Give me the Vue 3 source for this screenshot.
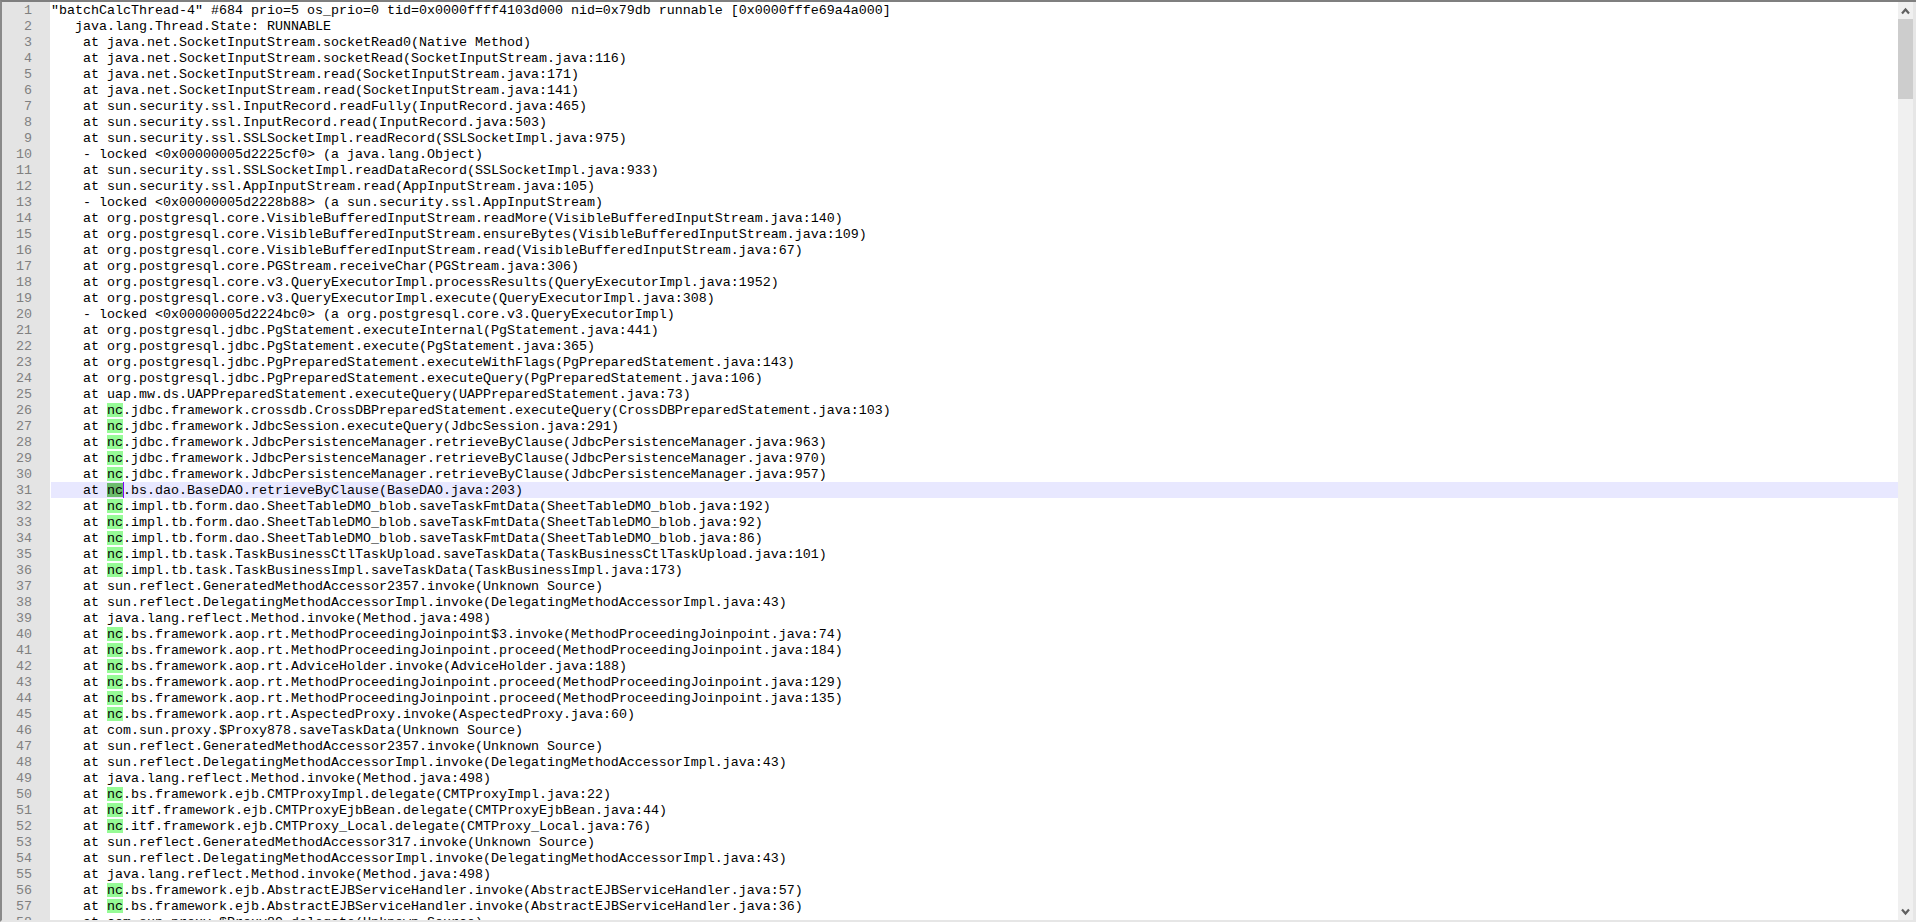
<script setup>
const raw = `"batchCalcThread-4" #684 prio=5 os_prio=0 tid=0x0000ffff4103d000 nid=0x79db runnable [0x0000fffe69a4a000]
   java.lang.Thread.State: RUNNABLE
    at java.net.SocketInputStream.socketRead0(Native Method)
    at java.net.SocketInputStream.socketRead(SocketInputStream.java:116)
    at java.net.SocketInputStream.read(SocketInputStream.java:171)
    at java.net.SocketInputStream.read(SocketInputStream.java:141)
    at sun.security.ssl.InputRecord.readFully(InputRecord.java:465)
    at sun.security.ssl.InputRecord.read(InputRecord.java:503)
    at sun.security.ssl.SSLSocketImpl.readRecord(SSLSocketImpl.java:975)
    - locked <0x00000005d2225cf0> (a java.lang.Object)
    at sun.security.ssl.SSLSocketImpl.readDataRecord(SSLSocketImpl.java:933)
    at sun.security.ssl.AppInputStream.read(AppInputStream.java:105)
    - locked <0x00000005d2228b88> (a sun.security.ssl.AppInputStream)
    at org.postgresql.core.VisibleBufferedInputStream.readMore(VisibleBufferedInputStream.java:140)
    at org.postgresql.core.VisibleBufferedInputStream.ensureBytes(VisibleBufferedInputStream.java:109)
    at org.postgresql.core.VisibleBufferedInputStream.read(VisibleBufferedInputStream.java:67)
    at org.postgresql.core.PGStream.receiveChar(PGStream.java:306)
    at org.postgresql.core.v3.QueryExecutorImpl.processResults(QueryExecutorImpl.java:1952)
    at org.postgresql.core.v3.QueryExecutorImpl.execute(QueryExecutorImpl.java:308)
    - locked <0x00000005d2224bc0> (a org.postgresql.core.v3.QueryExecutorImpl)
    at org.postgresql.jdbc.PgStatement.executeInternal(PgStatement.java:441)
    at org.postgresql.jdbc.PgStatement.execute(PgStatement.java:365)
    at org.postgresql.jdbc.PgPreparedStatement.executeWithFlags(PgPreparedStatement.java:143)
    at org.postgresql.jdbc.PgPreparedStatement.executeQuery(PgPreparedStatement.java:106)
    at uap.mw.ds.UAPPreparedStatement.executeQuery(UAPPreparedStatement.java:73)
    at nc.jdbc.framework.crossdb.CrossDBPreparedStatement.executeQuery(CrossDBPreparedStatement.java:103)
    at nc.jdbc.framework.JdbcSession.executeQuery(JdbcSession.java:291)
    at nc.jdbc.framework.JdbcPersistenceManager.retrieveByClause(JdbcPersistenceManager.java:963)
    at nc.jdbc.framework.JdbcPersistenceManager.retrieveByClause(JdbcPersistenceManager.java:970)
    at nc.jdbc.framework.JdbcPersistenceManager.retrieveByClause(JdbcPersistenceManager.java:957)
    at nc.bs.dao.BaseDAO.retrieveByClause(BaseDAO.java:203)
    at nc.impl.tb.form.dao.SheetTableDMO_blob.saveTaskFmtData(SheetTableDMO_blob.java:192)
    at nc.impl.tb.form.dao.SheetTableDMO_blob.saveTaskFmtData(SheetTableDMO_blob.java:92)
    at nc.impl.tb.form.dao.SheetTableDMO_blob.saveTaskFmtData(SheetTableDMO_blob.java:86)
    at nc.impl.tb.task.TaskBusinessCtlTaskUpload.saveTaskData(TaskBusinessCtlTaskUpload.java:101)
    at nc.impl.tb.task.TaskBusinessImpl.saveTaskData(TaskBusinessImpl.java:173)
    at sun.reflect.GeneratedMethodAccessor2357.invoke(Unknown Source)
    at sun.reflect.DelegatingMethodAccessorImpl.invoke(DelegatingMethodAccessorImpl.java:43)
    at java.lang.reflect.Method.invoke(Method.java:498)
    at nc.bs.framework.aop.rt.MethodProceedingJoinpoint$3.invoke(MethodProceedingJoinpoint.java:74)
    at nc.bs.framework.aop.rt.MethodProceedingJoinpoint.proceed(MethodProceedingJoinpoint.java:184)
    at nc.bs.framework.aop.rt.AdviceHolder.invoke(AdviceHolder.java:188)
    at nc.bs.framework.aop.rt.MethodProceedingJoinpoint.proceed(MethodProceedingJoinpoint.java:129)
    at nc.bs.framework.aop.rt.MethodProceedingJoinpoint.proceed(MethodProceedingJoinpoint.java:135)
    at nc.bs.framework.aop.rt.AspectedProxy.invoke(AspectedProxy.java:60)
    at com.sun.proxy.$Proxy878.saveTaskData(Unknown Source)
    at sun.reflect.GeneratedMethodAccessor2357.invoke(Unknown Source)
    at sun.reflect.DelegatingMethodAccessorImpl.invoke(DelegatingMethodAccessorImpl.java:43)
    at java.lang.reflect.Method.invoke(Method.java:498)
    at nc.bs.framework.ejb.CMTProxyImpl.delegate(CMTProxyImpl.java:22)
    at nc.itf.framework.ejb.CMTProxyEjbBean.delegate(CMTProxyEjbBean.java:44)
    at nc.itf.framework.ejb.CMTProxy_Local.delegate(CMTProxy_Local.java:76)
    at sun.reflect.GeneratedMethodAccessor317.invoke(Unknown Source)
    at sun.reflect.DelegatingMethodAccessorImpl.invoke(DelegatingMethodAccessorImpl.java:43)
    at java.lang.reflect.Method.invoke(Method.java:498)
    at nc.bs.framework.ejb.AbstractEJBServiceHandler.invoke(AbstractEJBServiceHandler.java:57)
    at nc.bs.framework.ejb.AbstractEJBServiceHandler.invoke(AbstractEJBServiceHandler.java:36)
    at com.sun.proxy.$Proxy89.delegate(Unknown Source)`;

const PREFIX = "    at nc.";
const lines = raw.split("\n").map((text, i) => {
  const marked = text.startsWith(PREFIX);
  return {
    no: i + 1,
    current: i + 1 === 31,
    before: marked ? "    at " : text,
    marked,
    after: marked ? text.slice(PREFIX.length - 1) : "",
  };
});
</script>

<template>
  <div class="window">
    <div class="editor">
      <div class="gutter">
        <div v-for="l in lines" :key="l.no" class="num">{{ l.no }}</div>
      </div>
      <div class="code">
        <div v-for="l in lines" :key="l.no" class="line" :class="{ current: l.current }">
          <span>{{ l.before }}</span><span v-if="l.marked" class="mark" :class="{ selected: l.current }">nc</span><span v-if="l.current" class="caret"></span><span>{{ l.after }}</span>
        </div>
      </div>
      <div class="scrollbar">
        <div class="btn">
          <svg width="9" height="8" viewBox="0 0 9 8"><path d="M1 6.5 L4.5 2.5 L8 6.5" fill="none" stroke="#606060" stroke-width="2.2" /></svg>
        </div>
        <div class="thumb"></div>
        <div class="track"></div>
        <div class="btn">
          <svg width="9" height="8" viewBox="0 0 9 8"><path d="M1 1.5 L4.5 5.5 L8 1.5" fill="none" stroke="#606060" stroke-width="2.2" /></svg>
        </div>
      </div>
    </div>
  </div>
</template>

<style scoped>
.window {
  height: 922px;
  box-sizing: border-box;
  overflow: hidden;
  display: flex;
  background: #e6e6e6;
  border-top: 2px solid #7f7f7f;
  border-left: 2px solid #8a8a8a;
  border-bottom: 2px solid #e6e6e6;
  padding-right: 3px;
  font: 13.333px/18px "Liberation Mono", "Courier New", monospace;
  color: #000;
}
.editor {
  flex: 1;
  min-width: 0;
  display: flex;
  overflow: hidden;
}
.gutter {
  width: 48px;
  flex: none;
  background: #e4e4e4;
  color: #808080;
  text-align: right;
  box-sizing: border-box;
  padding-right: 18px;
}
.num {
  height: 16px;
}
.code {
  flex: 1;
  min-width: 0;
  background: #fff;
  padding-left: 1px;
}
.line {
  height: 16px;
  white-space: pre;
  display: flex;
}
.line.current {
  background: #e8e8ff;
}
.mark {
  background: #96fb96;
  display: block;
  height: 14px;
  margin-top: 1px;
  line-height: 16px;
}
.mark.selected {
  background: #6cbc6c;
}
.caret {
  width: 1px;
  height: 16px;
  margin-right: -1px;
  background: #8000ff;
}
.scrollbar {
  width: 15px;
  flex: none;
  display: flex;
  flex-direction: column;
  background: #f0f0f0;
}
.btn {
  height: 17px;
  flex: none;
  display: flex;
  align-items: center;
  justify-content: center;
}
.thumb {
  height: 80px;
  flex: none;
  background: #cdcdcd;
}
.track {
  flex: 1;
}
</style>
